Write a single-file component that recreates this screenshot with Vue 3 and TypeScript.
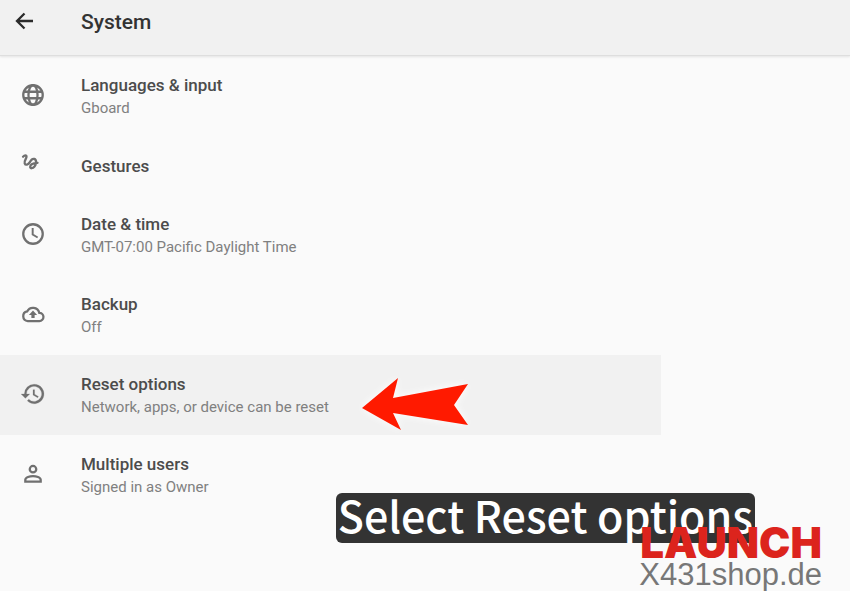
<script setup lang="ts">
import { ref } from 'vue'

type IconName = 'globe' | 'gesture' | 'clock' | 'cloud' | 'restore' | 'person'

interface Setting {
  id: string
  icon: IconName
  title: string
  summary?: string
}

const settings: Setting[] = [
  { id: 'languages', icon: 'globe', title: 'Languages & input', summary: 'Gboard' },
  { id: 'gestures', icon: 'gesture', title: 'Gestures' },
  { id: 'datetime', icon: 'clock', title: 'Date & time', summary: 'GMT-07:00 Pacific Daylight Time' },
  { id: 'backup', icon: 'cloud', title: 'Backup', summary: 'Off' },
  { id: 'reset', icon: 'restore', title: 'Reset options', summary: 'Network, apps, or device can be reset' },
  { id: 'users', icon: 'person', title: 'Multiple users', summary: 'Signed in as Owner' },
]

const selected = ref('reset')
</script>

<template>
  <div class="screen">
    <header class="bar">
      <button class="back" type="button" aria-label="Back">
        <svg viewBox="0 0 24 24" width="24" height="24" aria-hidden="true">
          <path d="M21 11H5.500M12.500 3.500 5 11l7.500 7.500" fill="none" stroke="currentColor" stroke-width="2.300" />
        </svg>
      </button>
      <h1>System</h1>
    </header>

    <main class="content">
      <ul class="list">
        <li v-for="item in settings" :key="item.id">
          <button
            type="button"
            class="row"
            :class="{ active: item.id === selected, single: !item.summary }"
            @click="selected = item.id"
          >
            <svg class="icon" viewBox="0 0 24 24" aria-hidden="true">
              <g v-if="item.icon === 'globe'" fill="none" stroke="currentColor" stroke-width="2.100">
                <circle cx="12" cy="12" r="9" />
                <ellipse cx="12" cy="12" rx="4.200" ry="9" />
                <path d="M3.600 9h16.800M3.600 15h16.800" />
              </g>
              <path
                v-else-if="item.icon === 'gesture'"
                d="M2.800 4.400C4.200 2.800 6.200 2.600 6 4.600 5.800 6.400 3.600 8.400 4.300 10.400c.8 2.200 3.400 1.400 4.600-.8C10 7.400 11.200 5.800 13.200 6.400c2.300.8 2 4.800.2 7-1.600 2.100-4 2-4 .4 0-2 2.600-3.600 6.800-3.800"
                fill="none"
                stroke="currentColor"
                stroke-width="2.100"
                stroke-linecap="round"
              />
              <g v-else-if="item.icon === 'clock'" fill="none" stroke="currentColor" stroke-width="2.100">
                <circle cx="12" cy="12" r="9" />
                <path d="M11.700 6.500v6l4.600 2.700" stroke-width="1.800" />
              </g>
              <g v-else-if="item.icon === 'cloud'">
                <path
                  d="M17.800 10.900A6 6 0 0 0 6.600 9.600 4.500 4.500 0 0 0 7.200 18.500h10.700a3.800 3.800 0 0 0-.1-7.600Z"
                  fill="none"
                  stroke="currentColor"
                  stroke-width="2.100"
                />
                <path d="M12 8.800 15.800 13h-2.300v2.800h-3V13H8.200z" fill="currentColor" />
              </g>
              <path
                v-else-if="item.icon === 'restore'"
                d="M13 3a9 9 0 0 0-9 9H1l3.900 3.900.1.100L9 12H6a7 7 0 1 1 2.100 4.900l-1.400 1.400A9 9 0 1 0 13 3zm-1 5v5l4.300 2.500.7-1.200-3.500-2.100V8z"
                fill="currentColor"
                stroke="currentColor"
                stroke-width=".2"
              />
              <g v-else fill="none" stroke="currentColor" stroke-width="2.100">
                <circle cx="12" cy="7.600" r="3" />
                <path d="M4.900 19v-1.600c0-2.300 4.200-3.500 7.100-3.500s7.100 1.200 7.100 3.500V19z" />
              </g>
            </svg>
            <span class="text">
              <span class="title">{{ item.title }}</span>
              <span v-if="item.summary" class="summary">{{ item.summary }}</span>
            </span>
          </button>
          <svg v-if="item.id === 'reset'" class="pointer" viewBox="0 0 106 54" aria-hidden="true">
            <path d="M0 31 36 1 31 21 106 7 92 28 106 48 31 36 39 53Z" fill="#ff1a00" />
          </svg>
        </li>
      </ul>
    </main>

    <p class="caption">Select Reset options</p>
    <div class="brand">
      <strong>LAUNCH</strong>
      <span>X431shop.de</span>
    </div>
  </div>
</template>

<style>
body {
  margin: 0;
  background: #fafafa;
}
</style>

<style scoped>
.screen {
  position: relative;
  min-height: 100vh;
  overflow: hidden;
  background: #fafafa;
  color: #4c4c4c;
  font-family: Roboto, "Liberation Sans", sans-serif;
}

.bar {
  display: flex;
  align-items: center;
  gap: 44px;
  box-sizing: border-box;
  height: 56px;
  padding: 0 12px 12px;
  background: #f1f1f1;
  border-bottom: 1px solid #dedede;
  box-shadow: 0 1px 2px #e4e4e4;
}

.back {
  display: flex;
  width: 25px;
  padding: 0;
  border: 0;
  background: none;
  color: #2b2b2b;
  cursor: pointer;
}

.back svg {
  flex: none;
}

h1 {
  margin: 0;
  color: #333333;
  font-size: 21px;
  font-weight: 500;
  line-height: 28px;
}

.content {
  display: grid;
  grid-template-columns: 7fr 2fr;
}

.list {
  margin: 0;
  padding: 0;
  list-style: none;
}

.list li {
  position: relative;
}

.row {
  display: flex;
  align-items: center;
  gap: 35px;
  box-sizing: border-box;
  width: 100%;
  min-height: 80px;
  padding: 0 20px 2px;
  border: 0;
  background: none;
  color: inherit;
  font: inherit;
  text-align: left;
  cursor: pointer;
}

.row.single {
  min-height: 59px;
}

.row.active {
  background: #f1f1f1;
}

.icon {
  flex: none;
  width: 26px;
  height: 26px;
  color: #707070;
}

.text {
  display: flex;
  flex-direction: column;
  gap: 1px;
  padding-top: 3px;
}

.title {
  font-size: 17px;
  font-weight: 500;
  line-height: 22px;
}

.summary {
  color: #808080;
  font-size: 15px;
  line-height: 22px;
}

.pointer {
  position: absolute;
  top: 22px;
  left: 362px;
  width: 106px;
  height: 54px;
  filter: drop-shadow(0 0 4px #ffffff);
}

.caption {
  position: absolute;
  right: 95px;
  bottom: 48px;
  margin: 0;
  padding: 0 2px 8px;
  border-radius: 6px;
  background: #333333;
  color: #ffffff;
  font-family: "Noto Sans CJK SC", "Noto Sans", sans-serif;
  font-size: 43px;
  font-weight: 500;
  line-height: 42px;
  white-space: nowrap;
}

.brand {
  position: absolute;
  right: 28px;
  bottom: 0;
  display: flex;
  flex-direction: column;
  align-items: flex-end;
}

.brand strong {
  color: #dc241d;
  font-family: Inter, "Liberation Sans", sans-serif;
  font-size: 42px;
  font-weight: 900;
  line-height: 32px;
}

.brand span {
  color: #777777;
  font-family: "Liberation Sans", Arial, sans-serif;
  font-size: 31px;
  line-height: 32px;
}
</style>
